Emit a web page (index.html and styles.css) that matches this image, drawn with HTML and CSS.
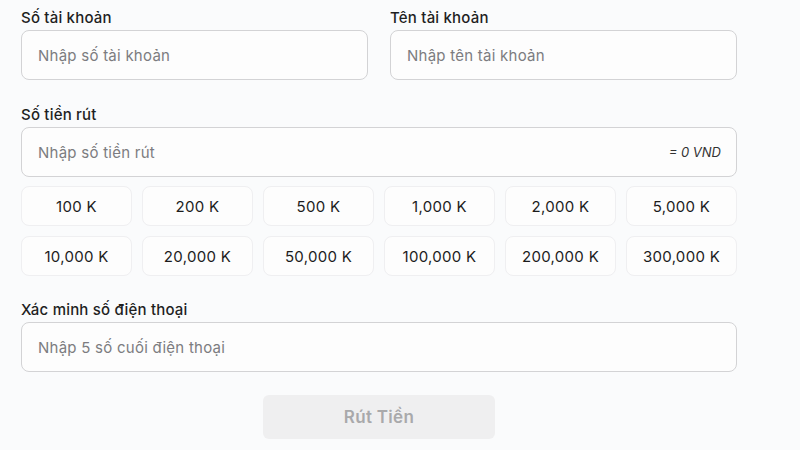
FILE: index.html
```html
<!DOCTYPE html>
<html lang="vi">
<head>
<meta charset="utf-8">
<title>Rút tiền</title>
<link rel="stylesheet" href="styles.css">
</head>
<body>
<main class="form">
  <div class="row two">
    <div class="field">
      <div class="label">Số tài khoản</div>
      <div class="input"><span class="ph">Nhập số tài khoản</span></div>
    </div>
    <div class="field">
      <div class="label">Tên tài khoản</div>
      <div class="input"><span class="ph">Nhập tên tài khoản</span></div>
    </div>
  </div>
  <div class="field amount">
    <div class="label">Số tiền rút</div>
    <div class="input"><span class="ph">Nhập số tiền rút</span><span class="vnd">= 0 VND</span></div>
  </div>
  <div class="presets">
    <div class="chip">100 K</div>
    <div class="chip">200 K</div>
    <div class="chip">500 K</div>
    <div class="chip">1,000 K</div>
    <div class="chip">2,000 K</div>
    <div class="chip">5,000 K</div>
    <div class="chip">10,000 K</div>
    <div class="chip">20,000 K</div>
    <div class="chip">50,000 K</div>
    <div class="chip">100,000 K</div>
    <div class="chip">200,000 K</div>
    <div class="chip">300,000 K</div>
  </div>
  <div class="field phone">
    <div class="label">Xác minh số điện thoại</div>
    <div class="input"><span class="ph">Nhập 5 số cuối điện thoại</span></div>
  </div>
  <div class="actions">
    <div class="submit">Rút Tiền</div>
  </div>
</main>
</body>
</html>
```
FILE: styles.css
```css
html, body {
  margin: 0;
  padding: 0;
  background: #fafbfc;
}
body {
  font-family: Inter, "Noto Sans", "Liberation Sans", sans-serif;
  color: #222;
}
.form {
  width: 716px;
  padding: 8px 0 0 21px;
  display: flex;
  flex-direction: column;
}
.row.two {
  display: grid;
  grid-template-columns: 347px 347px;
  column-gap: 22px;
}
.field {
  display: flex;
  flex-direction: column;
  gap: 2px;
}
.label {
  font-size: 15px;
  font-weight: 500;
  line-height: 20px;
  letter-spacing: 0.2px;
  color: #1f1f1f;
}
.input {
  box-sizing: border-box;
  height: 50px;
  border: 1px solid #d3d3d5;
  border-radius: 8px;
  background: #fdfdfd;
  padding: 0 15px 0 16px;
  display: flex;
  align-items: center;
  justify-content: space-between;
}
.ph {
  font-size: 15px;
  letter-spacing: 0.25px;
  color: #7c7c80;
}
.vnd {
  font-size: 13px;
  font-style: italic;
  color: #333;
}
.amount {
  margin-top: 25px;
}
.presets {
  margin-top: 9px;
  display: grid;
  grid-template-columns: repeat(6, 111px);
  grid-auto-rows: 40px;
  column-gap: 10px;
  row-gap: 10px;
}
.chip {
  box-sizing: border-box;
  border: 1px solid #efeff1;
  border-radius: 8px;
  background: #fdfdfd;
  display: flex;
  align-items: center;
  justify-content: center;
  font-size: 15px;
  font-weight: 400;
  letter-spacing: 0.3px;
  color: #1c1c1c;
}
.phone {
  margin-top: 24px;
}
.actions {
  margin-top: 23px;
  display: flex;
  justify-content: center;
}
.submit {
  width: 232px;
  height: 44px;
  border-radius: 6px;
  background: #efeff0;
  display: flex;
  align-items: center;
  justify-content: center;
  font-size: 17px;
  font-weight: 600;
  letter-spacing: 0.3px;
  color: #a9a9ab;
}
```
